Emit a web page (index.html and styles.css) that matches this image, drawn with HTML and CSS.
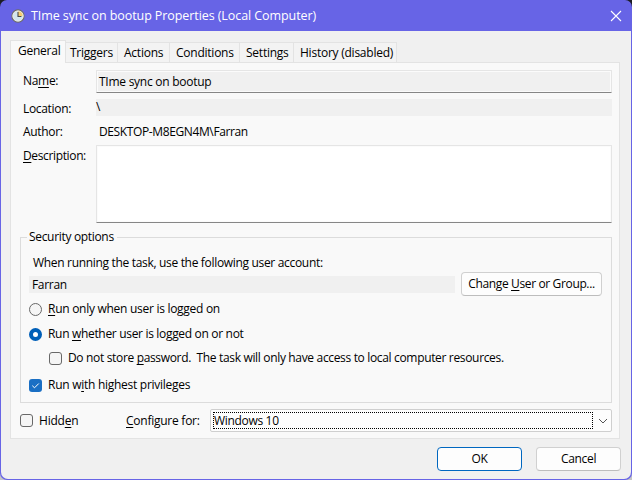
FILE: index.html
```html
<!DOCTYPE html>
<html lang="en">
<head>
<meta charset="utf-8">
<title>Task Properties</title>
<link rel="stylesheet" href="styles.css">
</head>
<body>
<div class="window">
  <header class="titlebar">
    <svg class="clock" width="14" height="14" viewBox="0 0 14 14"><circle cx="7" cy="7" r="6.1" fill="#d3e6ee" stroke="#6f6d66" stroke-width="1.1"/><path d="M7 7V2a5 5 0 0 1 5 5z" fill="#f7cd70"/><circle cx="7" cy="7" r="5.1" fill="none" stroke="#eeeade" stroke-width=".8"/><path d="M7 3v4.5h3.4" fill="none" stroke="#45494c" stroke-width="1.1"/></svg>
    <span class="title">TIme sync on bootup Properties (Local Computer)</span>
    <svg class="close" width="12" height="12" viewBox="0 0 12 12"><path d="M1 1l10 10M11 1L1 11" stroke="#fff" stroke-width="1.1"/></svg>
  </header>
  <main class="body">
    <nav class="tabs">
      <div class="tab active">General</div>
      <div class="tab triggers">Triggers</div>
      <div class="tab actions">Actions</div>
      <div class="tab conditions">Conditions</div>
      <div class="tab settings">Settings</div>
      <div class="tab history">History (disabled)</div>
    </nav>
    <section class="panel">
      <div class="row name"><label>Na<u>m</u>e:</label><div class="field edit">TIme sync on bootup</div></div>
      <div class="row location"><label>Location:</label><div class="field readonly">\</div></div>
      <div class="row author"><label>Author:</label><div class="field plain">DESKTOP-M8EGN4M\Farran</div></div>
      <div class="row description"><label><u>D</u>escription:</label><div class="field edit area"></div></div>
      <div class="group">
        <div class="legend">Security options</div>
        <div class="hint">When running the task, use the following user account:</div>
        <div class="account"><div class="user">Farran</div><div class="button change">Change <u>U</u>ser or Group...</div></div>
        <div class="option first"><i class="radio"></i><span><u>R</u>un only when user is logged on</span></div>
        <div class="option second"><i class="radio on"></i><span>Run <u>w</u>hether user is logged on or not</span></div>
        <div class="option third"><i class="check"></i><span>Do not store <u>p</u>assword.&nbsp; The task will only have access to local computer resources.</span></div>
        <div class="option fourth"><i class="check on"><svg width="13" height="13" viewBox="0 0 13 13"><path d="M3.3 6.7l2.2 2.1 4.3-4.3" fill="none" stroke="#fff" stroke-width="1"/></svg></i><span>Run w<u>i</u>th highest privileges</span></div>
      </div>
      <div class="bottom">
        <div class="option hidden"><i class="check"></i><span>Hidd<u>e</u>n</span></div>
        <label class="configure"><u>C</u>onfigure for:</label>
        <div class="select"><div class="focus">Windows 10</div><svg width="10" height="6" viewBox="0 0 10 6"><path d="M1 1l4 4 4-4" fill="none" stroke="#555" stroke-width="1"/></svg></div>
      </div>
    </section>
    <footer class="actions-bar"><div class="button ok">OK</div><div class="button">Cancel</div></footer>
  </main>
</div>
</body>
</html>
```
FILE: styles.css
```css
* { box-sizing: border-box; }
body { margin: 0; background: linear-gradient(#1c1c24 50%, #c4c4c8 50%); font: 12px/16px "Open Sans", "Noto Sans", sans-serif; color: #000; overflow: hidden; letter-spacing: -0.32px; white-space: nowrap; }
u { text-decoration: underline; text-underline-offset: 2px; text-decoration-thickness: 1px; text-decoration-skip-ink: none; }
.window { width: 632px; height: 480px; background: #6764e6; border-radius: 7px; overflow: hidden; padding: 0 1px 1px; }
.titlebar { height: 31px; display: flex; align-items: center; color: #fff; padding: 0 9px 0 10px; }
.title { margin-left: 6px; flex: 1; font-size: 12.5px; letter-spacing: -0.08px; }
.body { height: 448px; background: #f0f0f0; border-radius: 0 0 7px 7px; padding: 9px 11px 0 9px; }
.tabs { height: 22px; display: flex; align-items: flex-end; letter-spacing: -0.24px; }
.tab { height: 20px; border: 1px solid #e3e3e3; border-bottom: 0; border-left: 0; background: #f3f3f3; padding: 2px 0 0 4px; }
.tab.active { width: 56px; height: 23px; border-left: 1px solid #e3e3e3; background: #f9f9f9; padding: 2px 0 0 7px; position: relative; margin-bottom: -1px; }
.triggers { width: 52px; }
.tab.actions { width: 52px; padding-left: 6px; }
.conditions { width: 70px; padding-left: 6px; }
.settings { width: 54px; padding-left: 6px; }
.history { width: 103px; padding-left: 6px; }
.panel { width: 610px; height: 377px; background: #f9f9f9; border: 1px solid #e3e3e3; padding: 7px 7px 0 9px; }
.row { display: flex; margin-left: 3px; }
.row label { width: 73px; }
.field { flex: 1; padding-left: 3px; }
.edit { border: 1px solid #e5e5e5; border-bottom-color: #868686; background: #f0f0f0; box-shadow: inset 0 0 0 1px #fbfbfb; border-radius: 1px; padding-left: 2px; letter-spacing: -0.26px; }
.name { height: 23px; margin-bottom: 6px; }
.name label { padding-top: 3px; }
.name .field { padding-top: 3px; }
.location { height: 17px; margin-bottom: 7px; }
.location label { padding-top: 2px; }
.readonly { background: #f0f0f0; padding-left: 0; }
.author { height: 18px; margin-bottom: 4px; padding-top: 1px; }
.author .field { letter-spacing: -0.38px; }
.description { height: 78px; margin-bottom: 14px; }
.description label { padding-top: 3px; letter-spacing: -0.36px; }
.area { background: #fff; }
.group { width: 592px; height: 166px; border: 1px solid #dcdcdc; padding: 0 9px 0 8px; }
.legend { width: 90px; height: 16px; margin: -9px 0 10px -2px; padding-left: 2px; background: #f9f9f9; }
.hint { height: 16px; padding-left: 4px; }
.account { height: 24px; margin: 1px 0 6px; display: flex; align-items: center; justify-content: space-between; }
.user { width: 426px; height: 17px; background: #f0f0f0; padding-left: 3px; line-height: 17px; }
.button { width: 85px; height: 24px; border: 1px solid #d0d0d0; border-bottom-color: #bdbdbd; border-radius: 4px; background: #fdfdfd; text-align: center; line-height: 22px; }
.change { width: 141px; letter-spacing: -0.36px; }
.option { height: 14px; display: flex; align-items: center; gap: 6px; }
.radio, .check { width: 13px; height: 13px; border: 1px solid #686868; background: #f5f5f5; border-radius: 3px; flex: none; }
.radio { border-radius: 50%; }
.radio.on { border: 4px solid #005fb8; background: #fff; }
.check.on { border: 0; background: #1a6fc4; display: flex; }
.first span { letter-spacing: -0.28px; }
.second { margin-top: 11px; }
.third { margin: 10px 0 0 20px; }
.third span { letter-spacing: -0.335px; }
.fourth { margin-top: 13px; }
.fourth span { letter-spacing: -0.27px; }
.bottom { margin-top: 6px; height: 23px; display: flex; align-items: center; }
.hidden { width: 106px; }
.hidden span { letter-spacing: -0.2px; }
.configure { width: 84px; letter-spacing: -0.25px; }
.select { width: 402px; height: 23px; border: 1px solid #cfcfcf; background: #fdfdfd; border-radius: 2px; padding: 0 3px 0 2px; display: flex; align-items: center; justify-content: space-between; }
.focus { width: 380px; height: 17px; border: 1px dotted #000; line-height: 15px; }
.actions-bar { display: flex; justify-content: flex-end; gap: 14px; padding-top: 8px; margin-right: -1px; }
.ok { border-color: #0067c0; }
```
